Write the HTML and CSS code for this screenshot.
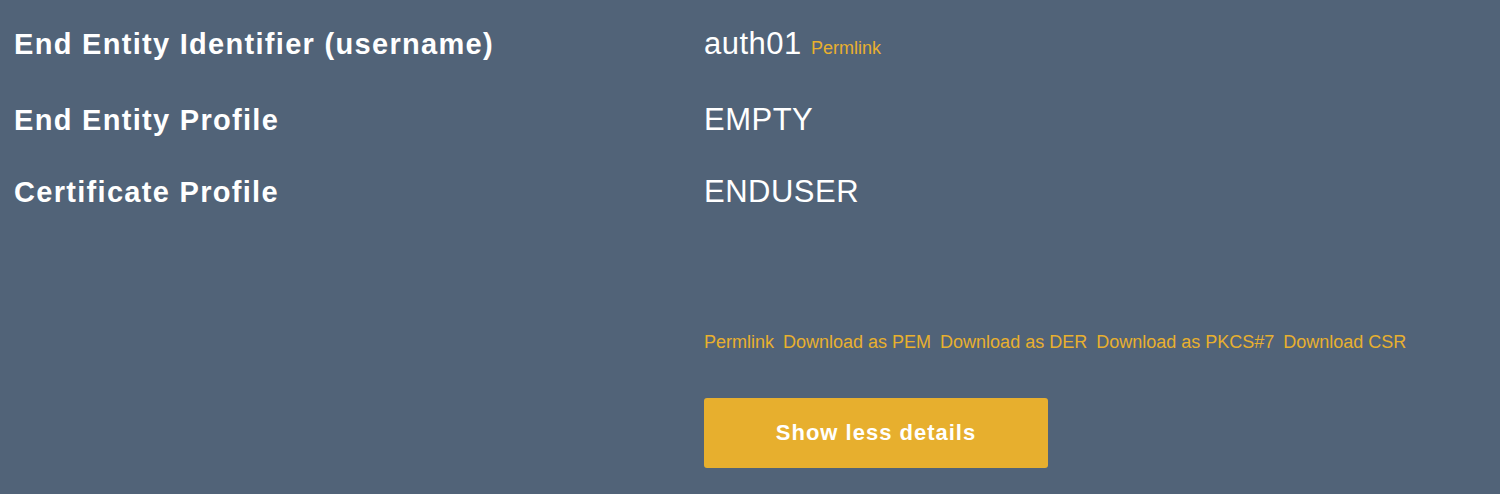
FILE: index.html
```html
<!DOCTYPE html>
<html>
<head>
<meta charset="utf-8">
<link rel="stylesheet" href="styles.css">
</head>
<body>
<div class="page">
  <div class="row first">
    <div class="label">End Entity Identifier (username)</div>
    <div class="value">auth01 <a class="small-link" href="#">Permlink</a></div>
  </div>
  <div class="row">
    <div class="label">End Entity Profile</div>
    <div class="value">EMPTY</div>
  </div>
  <div class="row">
    <div class="label">Certificate Profile</div>
    <div class="value">ENDUSER</div>
  </div>
  <div class="row actions-row">
    <div class="label"></div>
    <div class="actions">
      <div class="links">
        <a href="#">Permlink</a>
        <a href="#">Download as PEM</a>
        <a href="#">Download as DER</a>
        <a href="#">Download as PKCS#7</a>
        <a href="#">Download CSR</a>
      </div>
      <button class="btn">Show less details</button>
    </div>
  </div>
</div>
</body>
</html>
```

FILE: styles.css
```css
html, body {
  margin: 0;
  padding: 0;
  background: #516378;
  height: 100%;
}
body {
  font-family: "Liberation Sans", Arial, Helvetica, sans-serif;
  color: #ffffff;
}
.page {
  padding: 24px 14px 0 14px;
}
.row {
  display: grid;
  grid-template-columns: 690px 1fr;
  align-items: baseline;
  min-height: 72px;
}
.row.first {
  min-height: 76px;
}
.label {
  font-size: 29px;
  font-weight: bold;
  line-height: 40px;
  letter-spacing: 1.3px;
}
.value {
  font-size: 31px;
  line-height: 40px;
  letter-spacing: 0.5px;
}
a {
  color: #e8b02e;
  text-decoration: none;
}
.small-link {
  font-size: 18px;
  letter-spacing: 0;
  margin-left: 0;
}
.actions-row {
  padding-top: 88px;
}
.actions {
  display: flex;
  flex-direction: column;
  align-items: flex-start;
}
.links {
  display: flex;
  gap: 9px;
  font-size: 18px;
  line-height: 20px;
}
.btn {
  margin-top: 46px;
  width: 344px;
  height: 70px;
  background: #e7af2e;
  border: none;
  border-radius: 3px;
  color: #ffffff;
  font-family: "Liberation Sans", Arial, Helvetica, sans-serif;
  font-weight: bold;
  font-size: 22px;
  letter-spacing: 1px;
  padding: 0;
}
```
